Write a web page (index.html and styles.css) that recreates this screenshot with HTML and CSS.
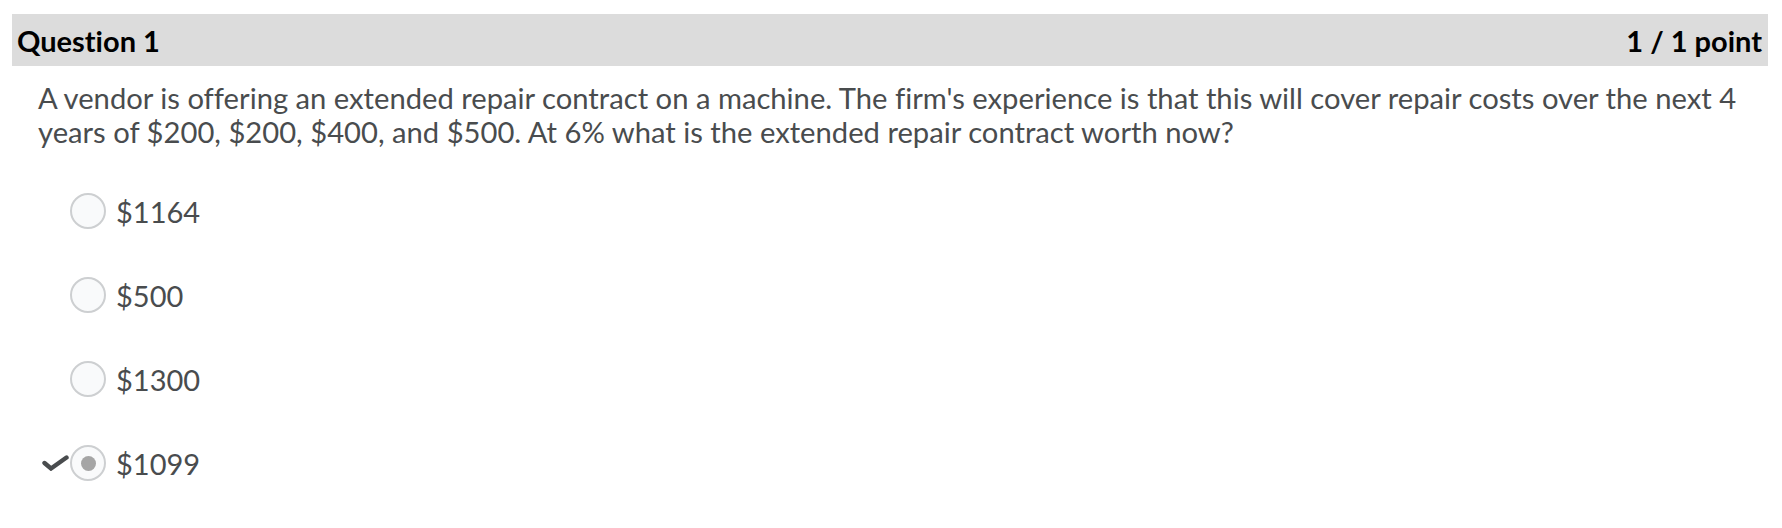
FILE: index.html
```html
<!DOCTYPE html>
<html lang="en">
<head>
<meta charset="utf-8">
<title>Question 1</title>
<link rel="stylesheet" href="styles.css">
</head>
<body>
<div class="page">
  <div class="q-header">
    <span class="q-title">Question 1</span>
    <span class="q-points">1 / 1 point</span>
  </div>
  <div class="q-body">
    <p class="q-text">A vendor is offering an extended repair contract on a machine. The firm's experience is that this will cover repair costs over the next 4 years of $200, $200, $400, and $500. At 6% what is the extended repair contract worth now?</p>
    <div class="options">
      <div class="option">
        <span class="mark"></span>
        <span class="radio"></span>
        <span class="label">$1164</span>
      </div>
      <div class="option">
        <span class="mark"></span>
        <span class="radio"></span>
        <span class="label">$500</span>
      </div>
      <div class="option">
        <span class="mark"></span>
        <span class="radio"></span>
        <span class="label">$1300</span>
      </div>
      <div class="option">
        <span class="mark">
          <svg width="27" height="16" viewBox="0 0 27 16"><path d="M2.5 8 L9 13.5 L24.5 2.5" fill="none" stroke="#494c4e" stroke-width="4.4" stroke-linecap="round" stroke-linejoin="miter"/></svg>
        </span>
        <span class="radio checked"><span class="dot"></span></span>
        <span class="label">$1099</span>
      </div>
    </div>
  </div>
</div>
</body>
</html>
```

FILE: styles.css
```css
html, body {
  margin: 0;
  padding: 0;
  background: #ffffff;
}

.page {
  padding: 14px 14px 0 12px;
  font-family: Lato, "Liberation Sans", sans-serif;
  font-variant-ligatures: none;
}

.q-header {
  display: flex;
  justify-content: space-between;
  align-items: center;
  height: 52px;
  background: #dcdcdc;
  padding: 0 6px 0 5px;
  color: #000000;
  font-weight: 700;
  font-size: 29px;
}

.q-body {
  padding: 0 0 0 21px;
  color: #494c4e;
}

.q-text {
  margin: 0;
  padding: 15px 0 0 5px;
  font-size: 29.2px;
  line-height: 34px;
}

.options {
  display: flex;
  flex-direction: column;
  gap: 48px;
  margin-top: 44px;
}

.option {
  display: flex;
  align-items: center;
  height: 36px;
}

.mark {
  display: flex;
  align-items: center;
  width: 37px;
  height: 36px;
  padding-left: 9px;
  box-sizing: border-box;
}

.radio {
  width: 36px;
  height: 36px;
  box-sizing: border-box;
  border: 2px solid #cdcfd1;
  border-radius: 50%;
  background: #f9fafb;
  display: flex;
  align-items: center;
  justify-content: center;
}

.dot {
  width: 15px;
  height: 15px;
  border-radius: 50%;
  background: #a5a5a5;
}

.label {
  margin-left: 10px;
  font-size: 29px;
}
```
